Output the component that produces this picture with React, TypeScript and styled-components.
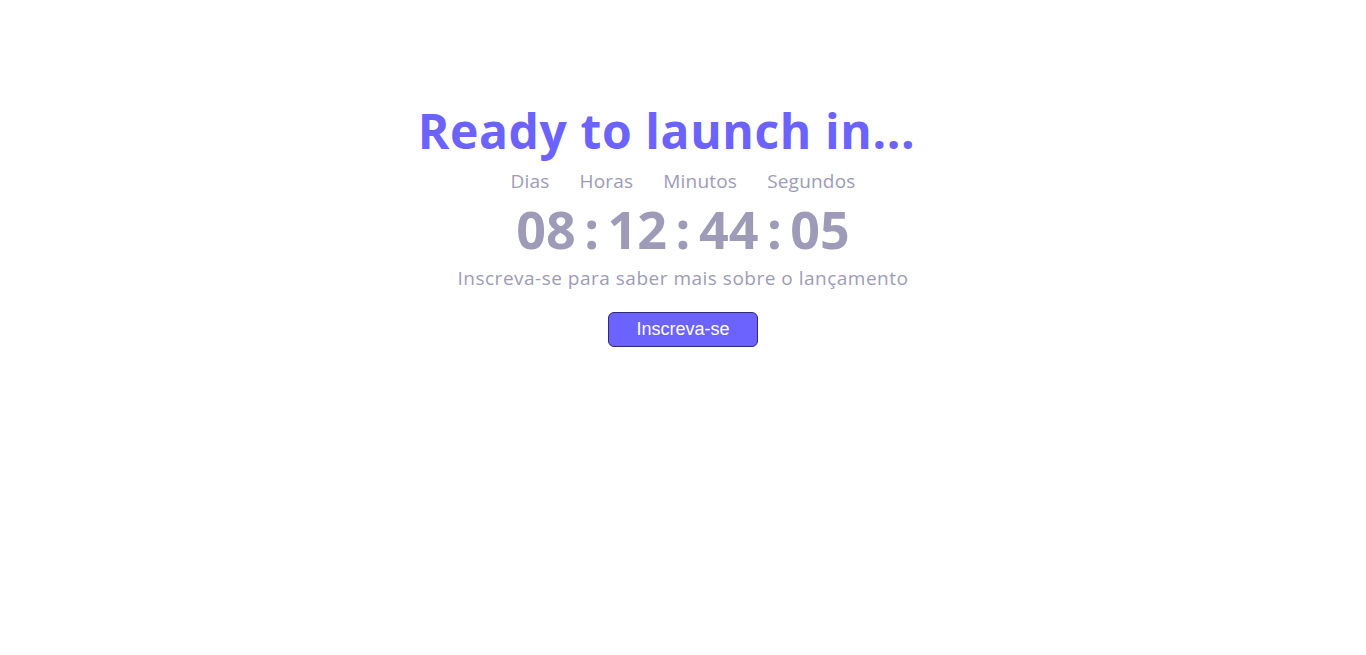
import React from 'react'
import styled, { createGlobalStyle } from 'styled-components'

const GlobalStyle = createGlobalStyle`
  * {
    box-sizing: border-box;
  }

  body {
    margin: 0;
    background-color: #fff;
    font-family: 'Open Sans', 'Noto Sans', sans-serif;
  }
`

const Page = styled.main`
  display: flex;
  flex-direction: column;
  align-items: center;
  min-height: 655px;
  padding-top: 99px;
`

const Title = styled.h1`
  margin: 0;
  padding-right: 33px;
  font-size: 48px;
  font-weight: 700;
  line-height: 64px;
  letter-spacing: 0.6px;
  color: #6c63ff;
`

const Labels = styled.div`
  display: flex;
  gap: 30px;
  margin-top: 6px;
`

const Label = styled.span`
  font-size: 19px;
  line-height: 24px;
  letter-spacing: 0.2px;
  color: #9e9bb8;
`

const Timer = styled.div`
  font-size: 52px;
  font-weight: 700;
  line-height: 72px;
  word-spacing: -5px;
  color: #9e9bb8;
`

const Subtitle = styled.p`
  margin: 1px 0 0;
  font-size: 19px;
  line-height: 24px;
  letter-spacing: 0.5px;
  color: #9e9bb8;
`

const SubscribeButton = styled.button`
  width: 150px;
  height: 35px;
  margin-top: 22px;
  font-family: 'Liberation Sans', Arial, sans-serif;
  font-size: 18px;
  color: #fff;
  background-color: #6c63ff;
  border: 1px solid #2f2a80;
  border-radius: 6px;
  cursor: pointer;
`

const units = ['Dias', 'Horas', 'Minutos', 'Segundos']
const values = ['08', '12', '44', '05']

export default function App() {
  return (
    <>
      <GlobalStyle />
      <Page>
        <Title>Ready to launch in...</Title>
        <Labels>
          {units.map(unit => (
            <Label key={unit}>{unit}</Label>
          ))}
        </Labels>
        <Timer>{values.join(' : ')}</Timer>
        <Subtitle>Inscreva-se para saber mais sobre o lançamento</Subtitle>
        <SubscribeButton>Inscreva-se</SubscribeButton>
      </Page>
    </>
  )
}
